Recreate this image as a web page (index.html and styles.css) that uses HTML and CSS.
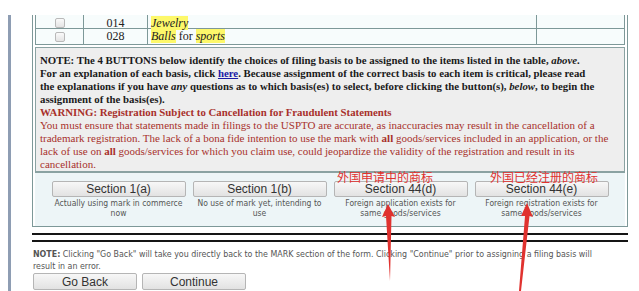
FILE: index.html
```html
<!DOCTYPE html>
<html lang="en">
<head>
  <meta charset="UTF-8">
  <title>Filing Basis</title>
  <link rel="stylesheet" href="styles.css">
</head>
<body>

  <div class="layout">
    <div class="rail"></div>

    <div class="main">
      <!-- Items + basis chooser -->
      <div class="form-box">
        <div class="items-clip">
          <table class="items">
            <tr>
              <td class="col-check"><input type="checkbox" class="check" disabled></td>
              <td class="col-code">014</td>
              <td class="col-desc"><span class="hl">Jewelry</span></td>
              <td class="col-extra"></td>
            </tr>
            <tr>
              <td class="col-check"><input type="checkbox" class="check" disabled></td>
              <td class="col-code">028</td>
              <td class="col-desc"><span class="hl">Balls</span> for <span class="hl">sports</span></td>
              <td class="col-extra"></td>
            </tr>
          </table>
        </div>

        <div class="notice">
          <p class="notice-main">
            NOTE: The 4 BUTTONS below identify the choices of filing basis to be assigned to the items listed in the table, <i>above</i>.<br>
            For an explanation of each basis, click <a href="#" class="notice-link">here</a>. Because assignment of the correct basis to each item is critical, please read<br>
            the explanations if you have <i>any</i> questions as to which basis(es) to select, before clicking the button(s), <i>below</i>, to begin the<br>
            assignment of the basis(es).
          </p>
          <p class="notice-warn">
            <b>WARNING: Registration Subject to Cancellation for Fraudulent Statements</b><br>
            You must ensure that statements made in filings to the USPTO are accurate, as inaccuracies may result in the cancellation of a<br>
            trademark registration. The lack of a bona fide intention to use the mark with <b>all</b> goods/services included in an application, or the<br>
            lack of use on <b>all</b> goods/services for which you claim use, could jeopardize the validity of the registration and result in its<br>
            cancellation.
          </p>
        </div>

        <div class="basis-row">
          <div class="basis">
            <button class="btn">Section 1(a)</button>
            <div class="basis-desc">Actually using mark in commerce<br>now</div>
          </div>
          <div class="basis">
            <button class="btn">Section 1(b)</button>
            <div class="basis-desc">No use of mark yet, intending to<br>use</div>
          </div>
          <div class="basis">
            <button class="btn">Section 44(d)</button>
            <div class="basis-desc">Foreign application exists for<br>same goods/services</div>
          </div>
          <div class="basis">
            <button class="btn">Section 44(e)</button>
            <div class="basis-desc">Foreign registration exists for<br>same goods/services</div>
          </div>
        </div>
      </div>

      <div class="rule"></div>

      <p class="foot-note">
        <b>NOTE:</b> Clicking "Go Back" will take you directly back to the MARK section of the form. Clicking "Continue" prior to assigning a filing basis will<br>
        result in an error.
      </p>

      <div class="nav-buttons">
        <button class="btn btn-nav">Go Back</button>
        <button class="btn btn-nav">Continue</button>
      </div>
    </div>
  </div>

  <!-- Red annotations drawn over the page -->
  <div class="mark-label mark-44d">外国申请中的商标</div>
  <div class="mark-label mark-44e">外国已经注册的商标</div>
  <svg class="mark-arrows" width="639" height="291" viewBox="0 0 639 291">
    <polygon points="388,204 382,217 386,216 390,281 391.5,216 395,217" fill="#e0322f"/>
    <polygon points="527,203 521,216 525,216 519,291 521,291 529.5,216 533,217" fill="#e0322f"/>
  </svg>

</body>
</html>
```

FILE: styles.css
```css
/* Global */
body {
  margin: 0;
  padding: 0;
  background-color: #fff;
  font-family: 'Liberation Serif', 'Times New Roman', serif;
  overflow: hidden;
}

.layout {
  display: flex;
  margin-top: 15px;
  min-height: 276px;
}

.rail {
  width: 3px;
  margin-left: 8px;
  margin-right: 21px;
  background-color: #8e9db3;
}

.main {
  width: 596px;
}

/* Form box */
.form-box {
  border: 1px solid #7d9898;
  border-top: none;
  padding: 0 2px;
}

.items-clip {
  overflow: hidden;
}

.items {
  width: 100%;
  border-collapse: collapse;
  border: 1px solid #7d9898;
  border-top: none;
  background-color: #f7fcfc;
  font-size: 12px;
  color: #222;
}

.items td {
  border: 1px solid #7d9898;
  height: 15px;
  padding: 0;
}

.items tr:first-child td {
  border-top: none;
  height: 13px;
  line-height: 10px;
  vertical-align: bottom;
}

.col-check {
  width: 47px;
  text-align: center;
}

.col-code {
  width: 63px;
  text-align: center;
}

.col-desc {
  width: 385px;
  padding-left: 3px !important;
}

.check {
  appearance: none;
  width: 10px;
  height: 10px;
  margin: 0;
  border: 1px solid #b9b9b9;
  border-radius: 2px;
  background: linear-gradient(#fafafa, #e4e4e4);
  vertical-align: middle;
}

.hl {
  background-color: #fdf86a;
  font-style: italic;
}

/* Notice */
.notice {
  margin-top: 2px;
  border: 1px solid #8aa2a2;
  background-color: #eeeeee;
  padding: 6px 4px 0;
  line-height: 13px;
  white-space: nowrap;
}

.notice p {
  margin: 0;
}

.notice-main {
  font-size: 10.8px;
  font-weight: bold;
  color: #1a1a1a;
}

.notice-link {
  color: #1a1aa6;
}

.notice-warn {
  font-size: 11px;
  color: #a8312c;
}

.notice-warn > b:first-child {
  font-size: 10.8px;
}

/* Basis buttons */
.basis-row {
  display: grid;
  grid-template-columns: repeat(4, 141px);
  padding: 8px 13px 8px;
  background-color: #edf5f7;
  border-top: 1px solid #8aa2a2;
}

.basis {
  display: flex;
  flex-direction: column;
  align-items: center;
}

.btn {
  font-family: 'Liberation Sans', Arial, sans-serif;
  font-size: 12px;
  color: #333;
  background: linear-gradient(#f7f7f7, #e2e2e2);
  border: 1px solid #b5b5b5;
  border-radius: 2px;
  padding: 0;
  height: 16px;
  line-height: 14px;
}

.basis .btn {
  width: 134px;
}

.basis-desc {
  margin-top: 1px;
  font-family: 'DejaVu Sans Condensed', 'DejaVu Sans', sans-serif;
  font-size: 8.5px;
  line-height: 10px;
  color: #555;
  text-align: center;
  white-space: nowrap;
}

/* Bottom part */
.rule {
  margin-top: 6px;
  height: 5px;
  border-top: 2px solid #151515;
  border-bottom: 2px solid #151515;
}

.foot-note {
  margin: 6px 0 0 1px;
  font-family: 'DejaVu Sans Condensed', 'DejaVu Sans', sans-serif;
  font-size: 8.8px;
  line-height: 12px;
  color: #555;
  white-space: nowrap;
}

.nav-buttons {
  display: flex;
  gap: 5px;
  margin: 1px 0 0 1px;
}

.btn-nav {
  width: 104px;
  height: 17px;
}

/* Annotations */
.mark-label {
  position: absolute;
  top: 170px;
  font-family: 'Noto Sans CJK SC', sans-serif;
  font-size: 12px;
  line-height: 14px;
  color: #e0322f;
}

.mark-44d {
  left: 337px;
}

.mark-44e {
  left: 490px;
}

.mark-arrows {
  position: absolute;
  top: 0;
  left: 0;
  pointer-events: none;
}
```
